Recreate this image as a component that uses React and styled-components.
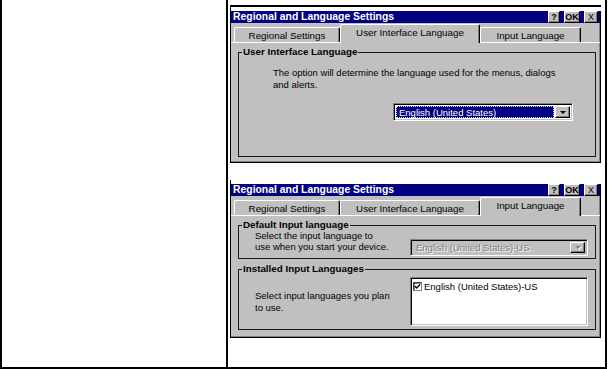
import React from 'react';
import styled, { createGlobalStyle } from 'styled-components';

const GlobalStyle = createGlobalStyle`
  html, body {
    margin: 0;
    padding: 0;
    background: #fff;
  }
  body {
    font-family: "Liberation Sans", Arial, sans-serif;
    color: #000;
  }
  * {
    box-sizing: border-box;
  }
`;

const Table = styled.div`
  display: grid;
  grid-template-columns: 226px 377px;
  width: 607px;
  height: 369px;
  border-left: 2px solid #000;
  border-right: 2px solid #000;
  border-bottom: 2px solid #000;
`;

const LeftCell = styled.div`
  border-right: 2px solid #000;
`;

const RightCell = styled.div`
  display: flex;
  flex-direction: column;
  align-items: flex-start;
  gap: 17px;
  padding: 5px 0 0 2px;
`;

const Shot = styled.div`
  width: 371px;
  border-left: 1px solid #000;
  border-top: ${p => (p.$framed ? '2px solid #000' : 'none')};
  padding-top: 4px;
`;

const Dialog = styled.div`
  height: ${p => p.$h}px;
  display: flex;
  flex-direction: column;
  background: #c0c0c0;
  border-right: 1px solid #000;
  border-bottom: 1px solid #000;
  box-shadow: inset -1px -1px 0 #808080;
`;

const TitleBar = styled.div`
  height: 12px;
  flex-shrink: 0;
  display: flex;
  align-items: center;
  justify-content: space-between;
  padding: 0 2px;
  background: #000080;
`;

const TitleText = styled.span`
  color: #fff;
  font-weight: bold;
  font-size: 10.4px;
  line-height: 12px;
  white-space: nowrap;
`;

const TitleButtons = styled.div`
  display: flex;
  gap: 4px;
`;

const TitleButton = styled.div`
  width: ${p => p.$w}px;
  height: 12px;
  display: flex;
  align-items: center;
  justify-content: center;
  background: #c0c0c0;
  border: 1px solid;
  border-color: #fff #000 #000 #fff;
  box-shadow: inset -1px -1px 0 #808080;
  font-size: 9px;
  font-weight: ${p => (p.$thin ? 'normal' : 'bold')};
  line-height: 9px;
  color: #000;
`;

const TabStrip = styled.div`
  height: 20px;
  flex-shrink: 0;
  display: flex;
  align-items: flex-end;
  padding-left: 3px;
  box-shadow: inset 0 -1px 0 #fff;
`;

const Tab = styled.div`
  width: ${p => p.$w}px;
  height: ${p => (p.$active ? 19 : 15)}px;
  margin-bottom: ${p => (p.$active ? 0 : 1)}px;
  padding-bottom: ${p => (p.$active ? 3 : 0)}px;
  display: flex;
  align-items: center;
  justify-content: center;
  background: #c0c0c0;
  border-top: 1px solid #fff;
  border-left: 1px solid #fff;
  border-right: 1px solid #000;
  border-radius: 2px 2px 0 0;
  box-shadow: inset -1px 0 0 #808080;
  font-size: 9.8px;
  white-space: nowrap;
`;

const Panel = styled.div`
  flex: 1;
  min-height: 0;
  display: flex;
  flex-direction: column;
  gap: 5px;
  padding: 4px 4px 5px 7px;
`;

const GroupBox = styled.fieldset`
  margin: 0;
  padding: 0;
  min-width: 0;
  border: 1px solid #1a1a1a;
  flex: ${p => (p.$grow ? 1 : 'none')};
`;

const Legend = styled.legend`
  margin-left: 3px;
  padding: 0 1px;
  font-weight: bold;
  font-size: 9.8px;
  line-height: 10px;
  white-space: nowrap;
`;

const Text = styled.div`
  font-size: 9.5px;
  line-height: ${p => p.$lh}px;
  white-space: nowrap;
`;

const Intro = styled(Text)`
  margin: 10px 0 0 34px;
`;

const ComboSlot = styled.div`
  margin: 12px 0 0 154px;
`;

const GroupRow = styled.div`
  display: flex;
  justify-content: space-between;
  align-items: ${p => p.$align};
  padding: ${p => p.$pad};
`;

const Combo = styled.div`
  width: ${p => p.$w}px;
  height: ${p => p.$h}px;
  margin-top: ${p => p.$top || 0}px;
  display: flex;
  gap: 1px;
  padding: 2px;
  background: ${p => (p.$disabled ? '#c0c0c0' : '#fff')};
  border: 1px solid;
  border-color: #808080 #fff #fff #808080;
  box-shadow: inset 1px 1px 0 #000, inset -1px -1px 0 #c0c0c0;
`;

const ComboField = styled.div`
  flex: 1;
  display: flex;
  align-items: center;
  padding-left: 2px;
  font-size: 9.5px;
  white-space: nowrap;
  background: ${p => (p.$selected ? '#000080' : 'transparent')};
  color: ${p => (p.$selected ? '#fff' : '#808080')};
  border: 1px dotted ${p => (p.$selected ? '#d8d8d8' : 'transparent')};
  text-shadow: ${p => (p.$selected ? 'none' : '1px 1px 0 #fff')};
`;

const ComboButton = styled.div`
  width: 15px;
  display: flex;
  align-items: center;
  justify-content: center;
  background: #c0c0c0;
  border: 1px solid;
  border-color: #fff #000 #000 #fff;
  box-shadow: inset -1px -1px 0 #808080;
`;

const Arrow = styled.span`
  width: 0;
  height: 0;
  border-left: 3px solid transparent;
  border-right: 3px solid transparent;
  border-top: 3px solid ${p => (p.$disabled ? '#808080' : '#000')};
  filter: ${p => (p.$disabled ? 'drop-shadow(1px 1px 0 #fff)' : 'none')};
`;

const ListBox = styled.div`
  width: 178px;
  height: 49px;
  padding: 3px 2px;
  background: #fff;
  border: 1px solid;
  border-color: #808080 #fff #fff #808080;
  box-shadow: inset 1px 1px 0 #000, inset -1px -1px 0 #c0c0c0;
`;

const ListItem = styled.div`
  display: flex;
  align-items: center;
  gap: 2px;
  font-size: 9.5px;
  line-height: 11px;
  white-space: nowrap;
`;

const Check = () => (
  <svg width="9" height="9" viewBox="0 0 9 9">
    <rect x="0.5" y="0.5" width="8" height="8" fill="#fff" stroke="#808080" />
    <path d="M1 1 H8" stroke="#000" strokeWidth="1" />
    <path d="M1 1 V8" stroke="#000" strokeWidth="1" />
    <path d="M2 4.2 L3.7 6 L7 2.6" fill="none" stroke="#000" strokeWidth="1.4" />
  </svg>
);

const DialogChrome = ({ active }) => (
  <>
    <TitleBar>
      <TitleText>Regional and Language Settings</TitleText>
      <TitleButtons>
        <TitleButton $w={12}>?</TitleButton>
        <TitleButton $w={16}>OK</TitleButton>
        <TitleButton $w={14} $thin>X</TitleButton>
      </TitleButtons>
    </TitleBar>
    <TabStrip>
      <Tab $w={106} $active={active === 0}>Regional Settings</Tab>
      <Tab $w={140} $active={active === 1}>User Interface Language</Tab>
      <Tab $w={101} $active={active === 2}>Input Language</Tab>
    </TabStrip>
  </>
);

const App = () => (
  <>
    <GlobalStyle />
    <Table>
      <LeftCell />
      <RightCell>
        <Shot $framed>
          <Dialog $h={152}>
            <DialogChrome active={1} />
            <Panel>
              <GroupBox $grow>
                <Legend>User Interface Language</Legend>
                <Intro $lh={12}>
                  The option will determine the language used for the menus, dialogs
                  <br />
                  and alerts.
                </Intro>
                <ComboSlot>
                  <Combo $w={180} $h={18}>
                    <ComboField $selected>English (United States)</ComboField>
                    <ComboButton>
                      <Arrow />
                    </ComboButton>
                  </Combo>
                </ComboSlot>
              </GroupBox>
            </Panel>
          </Dialog>
        </Shot>

        <Shot>
          <Dialog $h={154}>
            <DialogChrome active={2} />
            <Panel>
              <GroupBox>
                <Legend>Default Input language</Legend>
                <GroupRow $align="flex-start" $pad="0 7px 2px 16px">
                  <Text $lh={11}>
                    Select the input language to
                    <br />
                    use when you start your device.
                  </Text>
                  <Combo $w={178} $h={17} $top={9} $disabled>
                    <ComboField>English (United States)-US</ComboField>
                    <ComboButton>
                      <Arrow $disabled />
                    </ComboButton>
                  </Combo>
                </GroupRow>
              </GroupBox>
              <GroupBox>
                <Legend>Installed Input Languages</Legend>
                <GroupRow $align="center" $pad="3px 7px 3px 16px">
                  <Text $lh={12}>
                    Select input languages you plan
                    <br />
                    to use.
                  </Text>
                  <ListBox>
                    <ListItem>
                      <Check />
                      English (United States)-US
                    </ListItem>
                  </ListBox>
                </GroupRow>
              </GroupBox>
            </Panel>
          </Dialog>
        </Shot>
      </RightCell>
    </Table>
  </>
);

export default App;
